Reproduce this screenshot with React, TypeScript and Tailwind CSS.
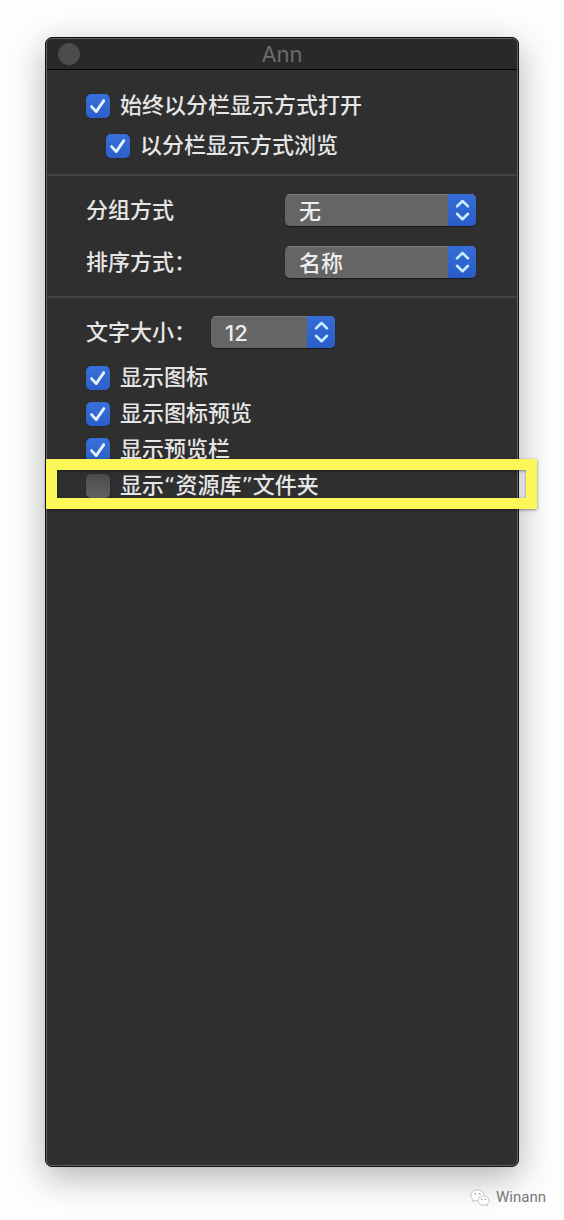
import { useState } from "react";
import type { ReactNode } from "react";

function CheckRow({ label, initial = true, children }: { label: string; initial?: boolean; children?: ReactNode }) {
  const [checked, setChecked] = useState(initial);
  return (
    <div className="relative">
      <label className="flex h-6 w-fit items-center gap-2.5">
        <span className="grid size-6 shrink-0">
          <input
            type="checkbox"
            checked={checked}
            onChange={(e) => setChecked(e.target.checked)}
            className="col-start-1 row-start-1 size-6 appearance-none rounded-[5px] bg-linear-to-b from-[#4b4b4b] to-[#626262] shadow-[0_0_1px_#111] checked:from-[#3970d8] checked:to-[#2b5ecb]"
          />
          {checked && (
            <svg viewBox="0 0 24 24" className="pointer-events-none col-start-1 row-start-1 size-6" fill="none" stroke="#e4f4ff" strokeWidth="2.8" strokeLinecap="round" strokeLinejoin="round">
              <path d="M5.600 12.600L10.200 17.600L17.800 6.600" />
            </svg>
          )}
        </span>
        <span className="font-['DejaVu_Sans','Noto_Sans_CJK_SC',sans-serif] leading-6 whitespace-nowrap">{label}</span>
      </label>
      {children}
    </div>
  );
}

function Picker({ id, options, className }: { id: string; options: string[]; className: string }) {
  return (
    <div className={`grid h-8 overflow-hidden rounded-[5px] shadow-[0_1px_1px_#1a1a1a] ${className}`}>
      <select
        id={id}
        className="col-start-1 row-start-1 h-8 w-full appearance-none border-t border-[#7b7b7c] bg-[#656566] pb-1 pl-3.5 text-[#eeeeee]"
      >
        {options.map((o) => (
          <option key={o}>{o}</option>
        ))}
      </select>
      <span className="pointer-events-none col-start-1 row-start-1 flex w-7 items-center justify-center justify-self-end bg-linear-to-b from-[#366dd6] to-[#2a5cc8]">
        <svg viewBox="0 0 28 32" className="h-8 w-7" fill="none" stroke="#c8ecff" strokeWidth="2.6" strokeLinecap="round" strokeLinejoin="round">
          <path d="M9 12.400L14.500 7L20 12.400M9 19.800L14.500 25.200L20 19.800" />
        </svg>
      </span>
    </div>
  );
}

export default function App() {
  return (
    <div className="flex min-h-screen flex-col bg-[#fdfdfd] px-[45px] pt-[37px] font-[Inter,'Noto_Sans_CJK_SC',sans-serif] text-[22px] font-medium text-[#e6e6e6]">
      <main className="flex flex-1 flex-col rounded-[7px] border border-[#111111] bg-[#2f2f2f] shadow-[0_10px_34px_rgba(0,0,0,0.3)]">
        <div className="flex flex-1 flex-col rounded-[6px] border border-[#606060]">
          <header className="grid h-[31px] grid-cols-[1fr_auto_1fr] items-center rounded-t-[5px] border-b border-black bg-[#292929] px-[11px]">
            <button type="button" aria-label="关闭" className="size-[22px] rounded-full bg-[#4c4c4c]" />
            <h1 className="leading-7 font-normal text-[#6b6b6b]">Ann</h1>
          </header>

          <section className="flex flex-col gap-4 border-b-2 border-[#434343] pt-6 pr-10 pb-4 pl-[39px]">
            <CheckRow label="始终以分栏显示方式打开" />
            <div className="pl-5">
              <CheckRow label="以分栏显示方式浏览" />
            </div>
          </section>

          <section className="flex flex-col gap-5 border-b-2 border-[#434343] py-[18px] pr-[41px] pl-[39px]">
            <div className="flex items-center justify-between">
              <label htmlFor="group" className="leading-8">分组方式</label>
              <Picker id="group" options={["无", "名称"]} className="w-[191px]" />
            </div>
            <div className="flex items-center justify-between">
              <label htmlFor="sort" className="leading-8">排序方式：</label>
              <Picker id="sort" options={["名称", "无"]} className="w-[191px]" />
            </div>
          </section>

          <section className="pt-[18px] pr-[41px] pl-[39px]">
            <div className="flex items-center">
              <label htmlFor="size" className="w-[125px] leading-8">文字大小：</label>
              <Picker id="size" options={["12", "13", "14"]} className="w-[124px]" />
            </div>
            <div className="flex flex-col gap-3 pt-[18px]">
              <CheckRow label="显示图标" />
              <CheckRow label="显示图标预览" />
              <CheckRow label="显示预览栏" />
              <CheckRow label="显示“资源库”文件夹" initial={false}>
                <span className="pointer-events-none absolute -top-[15px] -right-[61px] -bottom-[11px] -left-10 border-[11px] border-[#fbf757] shadow-[0_1px_3px_rgba(0,0,0,0.45),inset_0_1px_3px_rgba(0,0,0,0.45)]" />
              </CheckRow>
            </div>
          </section>
        </div>
      </main>
      <footer className="-mr-[27px] flex h-[53px] items-center justify-end gap-1.5 pt-2 font-[Roboto,sans-serif] text-[15px] font-normal text-[#777777]">
        <svg viewBox="0 0 20 18" className="h-[18px] w-5" fill="#ffffff" stroke="#b5b5b5" strokeWidth="0.8">
          <path d="M7.5 1C3.9 1 1 3.4 1 6.4c0 1.700.9 3.200 2.300 4.200L2.700 12.700l2.400-1.200c.8.200 1.600.3 2.400.3 3.600 0 6.500-2.400 6.500-5.400S11.100 1 7.500 1z" />
          <path d="M13.500 6.800c-3.100 0-5.500 2.100-5.500 4.700s2.400 4.700 5.500 4.700c.7 0 1.300-.1 1.900-.3l2 1-.5-1.800c1.300-.9 2.100-2.200 2.100-3.600 0-2.600-2.400-4.700-5.500-4.700z" />
          <g fill="#888888" stroke="none">
            <circle cx="5.300" cy="4.800" r="0.800" />
            <circle cx="9.700" cy="4.800" r="0.800" />
            <circle cx="11.700" cy="10.200" r="0.700" />
            <circle cx="15.300" cy="10.200" r="0.700" />
          </g>
        </svg>
        <span>Winann</span>
      </footer>
    </div>
  );
}
